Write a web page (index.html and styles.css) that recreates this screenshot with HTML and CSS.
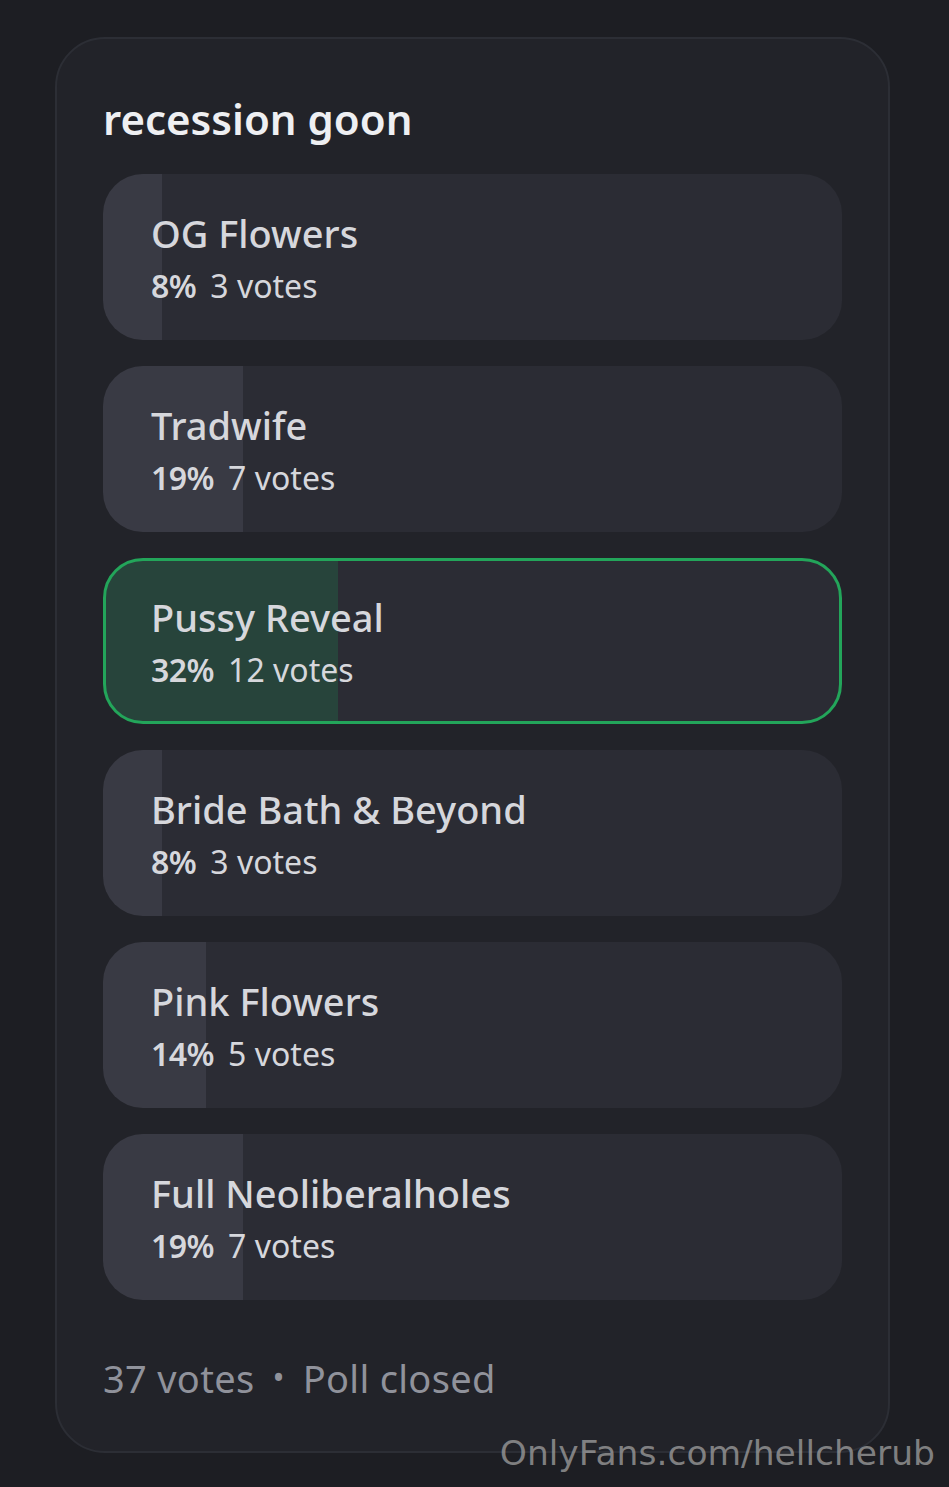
FILE: index.html
```html
<!DOCTYPE html>
<html>
<head>
<meta charset="utf-8">
<link rel="stylesheet" href="styles.css">
</head>
<body>
<div class="page">
  <div class="poll">
    <h1 class="title">recession goon</h1>
    <div class="options">
      <div class="option" style="--pct: 8%">
        <div class="label">OG Flowers</div>
        <div class="stats"><b>8%</b><span>3 votes</span></div>
      </div>
      <div class="option" style="--pct: 19%">
        <div class="label">Tradwife</div>
        <div class="stats"><b>19%</b><span>7 votes</span></div>
      </div>
      <div class="option selected" style="--pct: 32%">
        <div class="label">Pussy Reveal</div>
        <div class="stats"><b>32%</b><span>12 votes</span></div>
      </div>
      <div class="option" style="--pct: 8%">
        <div class="label">Bride Bath &amp; Beyond</div>
        <div class="stats"><b>8%</b><span>3 votes</span></div>
      </div>
      <div class="option" style="--pct: 14%">
        <div class="label">Pink Flowers</div>
        <div class="stats"><b>14%</b><span>5 votes</span></div>
      </div>
      <div class="option" style="--pct: 19%">
        <div class="label">Full Neoliberalholes</div>
        <div class="stats"><b>19%</b><span>7 votes</span></div>
      </div>
    </div>
    <div class="footer">37 votes<span class="dot">•</span>Poll closed</div>
  </div>
  <div class="watermark">OnlyFans.com/hellcherub</div>
</div>
</body>
</html>
```

FILE: styles.css
```css
html, body {
  margin: 0;
  padding: 0;
  background: #1d1e23;
}
body {
  font-family: "Noto Sans", "Open Sans", sans-serif;
}
.page {
  position: relative;
  width: 949px;
  height: 1487px;
  padding: 37px 0 0 55px;
  box-sizing: border-box;
}
.poll {
  width: 835px;
  height: 1416px;
  box-sizing: border-box;
  background: #222329;
  border: 2px solid #2c2e35;
  border-radius: 50px;
  padding: 0 46px;
}
.title {
  margin: 0;
  padding-top: 52px;
  height: 135px;
  box-sizing: border-box;
  font-size: 42px;
  line-height: 56px;
  font-weight: 600;
  color: #eeeff2;
}
.options {
  display: flex;
  flex-direction: column;
  gap: 26px;
}
.option {
  height: 166px;
  box-sizing: border-box;
  border-radius: 40px;
  background: linear-gradient(to right, #393a44 var(--pct), #2b2c34 var(--pct));
  padding: 33px 48px 0;
  color: #d6d7dc;
}
.option.selected {
  border: 3px solid #23a55a;
  padding: 30px 45px 0;
  background: linear-gradient(to right, #27443b calc(var(--pct) - 3px), #2b2c34 calc(var(--pct) - 3px));
}
.label {
  font-size: 38px;
  line-height: 52px;
  font-weight: 500;
}
.stats {
  margin-top: 5px;
  font-size: 32px;
  line-height: 44px;
  display: flex;
  gap: 14px;
}
.stats b {
  font-weight: 600;
  letter-spacing: -0.5px;
}
.footer {
  margin-top: 52px;
  font-size: 38px;
  line-height: 52px;
  color: #90929b;
  letter-spacing: 0.3px;
}
.dot {
  font-size: 32px;
  margin: 0 18px;
  position: relative;
  top: -4px;
}
.watermark {
  position: absolute;
  right: 14px;
  top: 1431px;
  font-family: "DejaVu Sans", sans-serif;
  font-size: 34.5px;
  line-height: 44px;
  color: rgba(160, 160, 160, 0.75);
}
```
